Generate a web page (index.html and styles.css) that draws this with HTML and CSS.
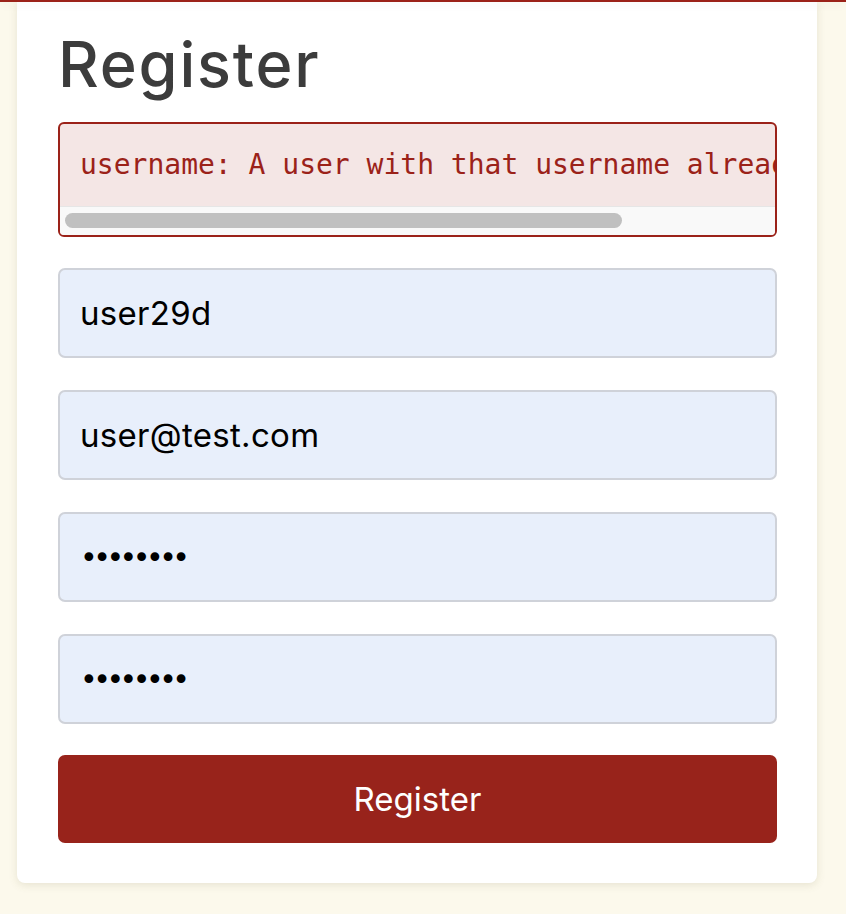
FILE: index.html
```html
<!DOCTYPE html>
<html lang="en">
<head>
<meta charset="utf-8">
<title>Register</title>
<link rel="stylesheet" href="styles.css">
</head>
<body>
<div class="topbar"></div>
<main class="page">
  <section class="card">
    <h1 class="title">Register</h1>
    <div class="error">
      <pre class="error-text">username: A user with that username already exists.</pre>
      <div class="scrollbar"><div class="thumb" style="width: 557px"></div></div>
    </div>
    <form class="form">
      <input class="field" type="text" value="user29d">
      <input class="field" type="email" value="user@test.com">
      <input class="field pw" type="password" value="12345678">
      <input class="field pw" type="password" value="12345678">
      <button class="submit" type="button">Register</button>
    </form>
  </section>
</main>
</body>
</html>
```
FILE: styles.css
```css
html, body {
  margin: 0;
  padding: 0;
}
body {
  background: #fcf9ec;
  font-family: Inter, "Noto Sans", sans-serif;
  overflow: hidden;
  height: 914px;
}
.topbar {
  position: relative;
  z-index: 2;
  height: 2px;
  background: #9b2219;
  box-shadow: 0 2px 10px rgba(0, 0, 0, 0.09);
}
.page {
  padding: 0 29px 0 17px;
}
.card {
  width: 800px;
  box-sizing: border-box;
  background: #ffffff;
  border-radius: 0 0 8px 8px;
  box-shadow: 0 2px 8px rgba(120, 110, 70, 0.16);
  padding: 24px 40px 40px 41px;
}
.title {
  margin: 0 0 19px;
  font-size: 63px;
  line-height: 77px;
  font-weight: 500;
  color: #3c3c3c;
  letter-spacing: 1.8px;
}
.error {
  border: 2px solid #9b2219;
  border-radius: 6px;
  background: #f4e6e5;
  overflow: hidden;
}
.error-text {
  margin: 0;
  color: #9b2219;
  font-family: "DejaVu Sans Mono", monospace;
  font-size: 28px;
  line-height: 42px;
  padding: 20px 20px;
  overflow: hidden;
  white-space: pre;
}
.scrollbar {
  height: 29px;
  box-sizing: border-box;
  background: #f9f9f9;
  border-top: 1px solid #e6e6e6;
  padding: 6px 5px;
}
.thumb {
  height: 15px;
  border-radius: 8px;
  background: #c0c0c0;
}
.form {
  display: flex;
  flex-direction: column;
  gap: 32px;
  margin-top: 31px;
}
.field {
  display: block;
  box-sizing: border-box;
  width: 100%;
  height: 90px;
  margin: 0;
  padding: 0 20px;
  border: 2px solid #cfd2d9;
  border-radius: 7px;
  background: #e8effb;
  color: #000000;
  font-family: Inter, "Noto Sans", sans-serif;
  font-size: 33px;
  letter-spacing: 0.3px;
  outline: none;
}
.field.pw {
  font-family: "DejaVu Sans", sans-serif;
  font-size: 30px;
  letter-spacing: -4.5px;
}
.submit {
  margin-top: -1px;
  height: 88px;
  border: none;
  border-radius: 7px;
  background: #98231b;
  color: #ffffff;
  font-family: Inter, "Noto Sans", sans-serif;
  font-size: 33px;
  font-weight: 400;
}
```
